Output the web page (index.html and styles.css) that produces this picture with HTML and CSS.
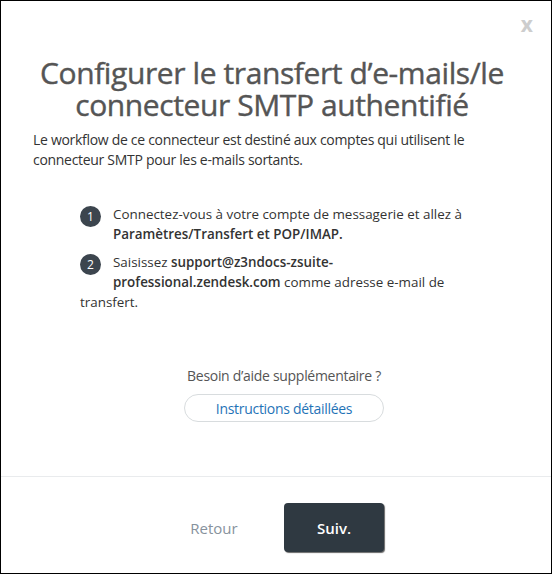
FILE: index.html
```html
<!DOCTYPE html>
<html lang="fr">
<head>
  <meta charset="UTF-8">
  <title>Configurer le transfert d'e-mails</title>
  <link rel="stylesheet" href="styles.css">
</head>
<body>
  <div class="modal">
    <div class="modal-header">
      <button class="close-btn">x</button>
    </div>

    <div class="modal-body">
      <h1 class="title">Configurer le transfert d’e-mails/le connecteur SMTP authentifié</h1>
      <p class="intro">Le workflow de ce connecteur est destiné aux comptes qui utilisent le connecteur SMTP pour les e-mails sortants.</p>

      <ol class="steps">
        <li class="step">
          <span class="step-num">1</span>
          Connectez-vous à votre compte de messagerie et allez à <strong>Paramètres/Transfert et POP/IMAP.</strong>
        </li>
        <li class="step">
          <span class="step-num">2</span>
          <span>Saisissez</span> <strong>support@z3ndocs-zsuite-</strong><strong>professional.zendesk.com</strong> <span>comme adresse e-mail de</span> <span>transfert.</span>
        </li>
      </ol>

      <div class="help">
        <p>Besoin d’aide supplémentaire ?</p>
        <button class="help-btn">Instructions détaillées</button>
      </div>
    </div>

    <div class="modal-footer">
      <button class="back-btn">Retour</button>
      <button class="next-btn">Suiv.</button>
    </div>
  </div>
</body>
</html>
```

FILE: styles.css
```css
* {
  box-sizing: border-box;
}

body {
  margin: 0;
  font-family: 'Open Sans', 'Noto Sans', sans-serif;
  background-color: #fff;
}

.modal {
  width: 552px;
  height: 574px;
  border: 1px solid #000;
  display: flex;
  flex-direction: column;
  background-color: #fff;
}

.modal-header {
  height: 56px;
  display: flex;
  justify-content: flex-end;
  align-items: flex-start;
  padding: 11px 18px 0 0;
}

.close-btn {
  background: none;
  border: none;
  padding: 0;
  font-family: inherit;
  font-size: 21px;
  font-weight: 700;
  line-height: 24px;
  color: #cdcdcd;
  cursor: pointer;
}

.modal-body {
  flex-grow: 1;
  padding: 0 16px 0 32px;
  display: flex;
  flex-direction: column;
}

.title {
  margin: 0;
  padding-right: 24px;
  font-size: 30px;
  font-weight: 400;
  letter-spacing: -0.4px;
  line-height: 32px;
  color: #555;
  text-align: center;
  -webkit-text-stroke: 0.4px #555;
}

.intro {
  margin: 9px 0 0;
  font-size: 14px;
  letter-spacing: -0.3px;
  line-height: 20px;
  color: #333;
}

.steps {
  list-style: none;
  margin: 34px auto 0;
  padding: 0;
  width: 408px;
  font-size: 13.4px;
  line-height: 20px;
  color: #333;
}

.step + .step {
  margin-top: 8px;
}

.step strong {
  font-weight: 600;
}

.step-num {
  float: left;
  width: 21px;
  height: 21px;
  margin: 2px 12px 0 0;
  border-radius: 50%;
  background-color: #3c454e;
  color: #fff;
  font-size: 12px;
  line-height: 21px;
  text-align: center;
}

.help {
  margin-top: 54px;
  text-align: center;
}

.help p {
  margin: 0;
  font-size: 14px;
  letter-spacing: -0.3px;
  line-height: 20px;
  color: #555;
}

.help-btn {
  margin-top: 8px;
  width: 200px;
  height: 28px;
  border: 1px solid #d8dcde;
  border-radius: 14px;
  background-color: #fff;
  font-family: inherit;
  font-size: 14px;
  letter-spacing: -0.3px;
  color: #1f73b7;
  cursor: pointer;
}

.modal-footer {
  height: 97px;
  border-top: 1px solid #e9ebed;
  display: flex;
  justify-content: center;
  align-items: flex-start;
  gap: 22px;
  padding: 26px 2px 0 0;
}

.back-btn,
.next-btn {
  font-family: inherit;
  font-size: 15px;
  height: 49px;
  cursor: pointer;
}

.back-btn {
  width: 96px;
  background: none;
  border: none;
  color: #87929d;
}

.next-btn {
  width: 100px;
  border: none;
  border-radius: 4px;
  background-color: #2f3941;
  color: #fff;
  font-weight: 600;
  box-shadow: 1px 1px 1px rgba(0, 0, 0, 0.6);
}
```
